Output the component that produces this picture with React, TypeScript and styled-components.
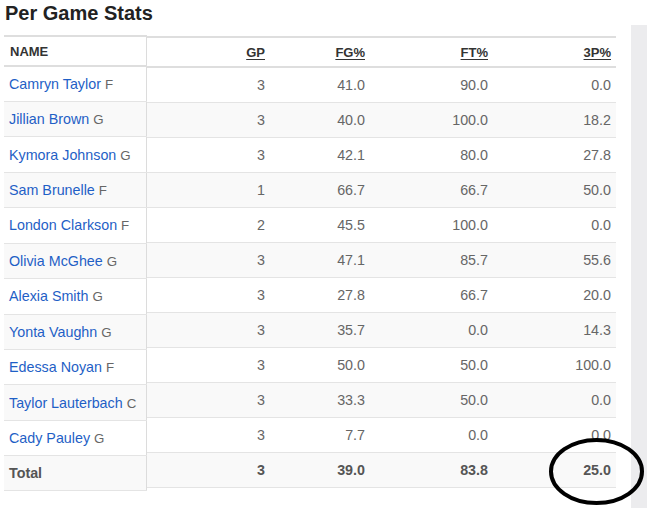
import React from "react";
import styled, { createGlobalStyle } from "styled-components";

const GlobalStyle = createGlobalStyle`
  body {
    margin: 0;
    background: #fff;
    font-family: "Liberation Sans", Arial, sans-serif;
  }
`;

const Page = styled.div`
  position: relative;
  width: 647px;
  height: 508px;
  overflow: hidden;
`;

const Title = styled.h2`
  margin: 0;
  height: 25px;
  padding: 1px 0 0 5px;
  box-sizing: border-box;
  font-size: 20px;
  font-weight: bold;
  color: #222;
  line-height: 24px;
`;

const Body = styled.div`
  display: flex;
  height: 483px;
`;

const Content = styled.div`
  width: 631px;
  padding: 10px 0 0 4px;
  box-sizing: border-box;
  display: flex;
  align-items: flex-start;
`;

const Track = styled.div`
  width: 16px;
  background: #ececee;
`;

const Table = styled.table<{ $offset?: number; $w: number }>`
  flex: none;
  width: ${(p) => p.$w}px;
  border-collapse: collapse;
  table-layout: fixed;
  margin-top: ${(p) => p.$offset ?? 0}px;
  font-size: 14.3px;
  color: #666;
`;

const FixedTable = styled(Table)`
  border-right: 1px solid #dcdcdc;
`;

const Row = styled.tr<{ $striped?: boolean; $h: number }>`
  height: ${(p) => p.$h}px;
  background: ${(p) => (p.$striped ? "#f9f9f9" : "#fff")};
  border-top: 1px solid #e4e4e4;
  border-bottom: 1px solid #e4e4e4;
`;

const HeadRow = styled(Row)`
  border-top: 2px solid #dedede;
  border-bottom: 2px solid #dedede;
`;

const Th = styled.th<{ $w?: number }>`
  box-sizing: border-box;
  width: ${(p) => (p.$w ? `${p.$w}px` : "auto")};
  padding: 0 5px;
  font-size: 13px;
  font-weight: bold;
  color: #333;
  text-align: right;
  vertical-align: middle;
  white-space: nowrap;
`;

const NameTh = styled(Th)`
  text-align: left;
  padding-left: 6px;
`;

const SortLabel = styled.span`
  text-decoration: underline;
  text-underline-offset: 2px;
`;

const Td = styled.td<{ $bold?: boolean }>`
  padding: 0 5px;
  text-align: right;
  vertical-align: middle;
  white-space: nowrap;
  font-weight: ${(p) => (p.$bold ? "bold" : "normal")};
  color: ${(p) => (p.$bold ? "#555" : "#666")};
`;

const NameTd = styled(Td)`
  text-align: left;
  padding-left: 5px;
`;

const PlayerLink = styled.a`
  color: #1f5fc6;
  text-decoration: none;
`;

const Pos = styled.span`
  font-size: 13.3px;
  color: #666;
`;

const Annotation = styled.svg`
  position: absolute;
  left: 546px;
  top: 436px;
  pointer-events: none;
`;

const players = [
  { name: "Camryn Taylor", pos: "F", gp: 3, fg: "41.0", ft: "90.0", tp: "0.0" },
  { name: "Jillian Brown", pos: "G", gp: 3, fg: "40.0", ft: "100.0", tp: "18.2" },
  { name: "Kymora Johnson", pos: "G", gp: 3, fg: "42.1", ft: "80.0", tp: "27.8" },
  { name: "Sam Brunelle", pos: "F", gp: 1, fg: "66.7", ft: "66.7", tp: "50.0" },
  { name: "London Clarkson", pos: "F", gp: 2, fg: "45.5", ft: "100.0", tp: "0.0" },
  { name: "Olivia McGhee", pos: "G", gp: 3, fg: "47.1", ft: "85.7", tp: "55.6" },
  { name: "Alexia Smith", pos: "G", gp: 3, fg: "27.8", ft: "66.7", tp: "20.0" },
  { name: "Yonta Vaughn", pos: "G", gp: 3, fg: "35.7", ft: "0.0", tp: "14.3" },
  { name: "Edessa Noyan", pos: "F", gp: 3, fg: "50.0", ft: "50.0", tp: "100.0" },
  { name: "Taylor Lauterbach", pos: "C", gp: 3, fg: "33.3", ft: "50.0", tp: "0.0" },
  { name: "Cady Pauley", pos: "G", gp: 3, fg: "7.7", ft: "0.0", tp: "0.0" },
];

const total = { gp: 3, fg: "39.0", ft: "83.8", tp: "25.0" };

const App = () => {
  return (
    <Page>
      <GlobalStyle />
      <Title>Per Game Stats</Title>
      <Body>
        <Content>
          <FixedTable $w={143}>
            <thead>
              <HeadRow $h={30}>
                <NameTh>NAME</NameTh>
              </HeadRow>
            </thead>
            <tbody>
              {players.map((p, i) => (
                <Row key={p.name} $h={35.45} $striped={i % 2 === 1}>
                  <NameTd>
                    <PlayerLink href="#">{p.name}</PlayerLink> <Pos>{p.pos}</Pos>
                  </NameTd>
                </Row>
              ))}
              <Row $h={35} $striped>
                <NameTd $bold>Total</NameTd>
              </Row>
            </tbody>
          </FixedTable>

          <Table $offset={1} $w={469}>
            <thead>
              <HeadRow $h={30}>
                <Th $w={123}>
                  <SortLabel>GP</SortLabel>
                </Th>
                <Th $w={100}>
                  <SortLabel>FG%</SortLabel>
                </Th>
                <Th $w={123}>
                  <SortLabel>FT%</SortLabel>
                </Th>
                <Th $w={123}>
                  <SortLabel>3P%</SortLabel>
                </Th>
              </HeadRow>
            </thead>
            <tbody>
              {players.map((p, i) => (
                <Row key={p.name} $h={35} $striped={i % 2 === 1}>
                  <Td>{p.gp}</Td>
                  <Td>{p.fg}</Td>
                  <Td>{p.ft}</Td>
                  <Td>{p.tp}</Td>
                </Row>
              ))}
              <Row $h={35} $striped>
                <Td $bold>{total.gp}</Td>
                <Td $bold>{total.fg}</Td>
                <Td $bold>{total.ft}</Td>
                <Td $bold>{total.tp}</Td>
              </Row>
            </tbody>
          </Table>
        </Content>
        <Track />
      </Body>
      <Annotation width="101" height="71" viewBox="0 0 101 71">
        <ellipse
          cx="50.5"
          cy="35.5"
          rx="45.5"
          ry="31.5"
          fill="none"
          stroke="#000"
          strokeWidth="4"
        />
      </Annotation>
    </Page>
  );
};

export default App;
